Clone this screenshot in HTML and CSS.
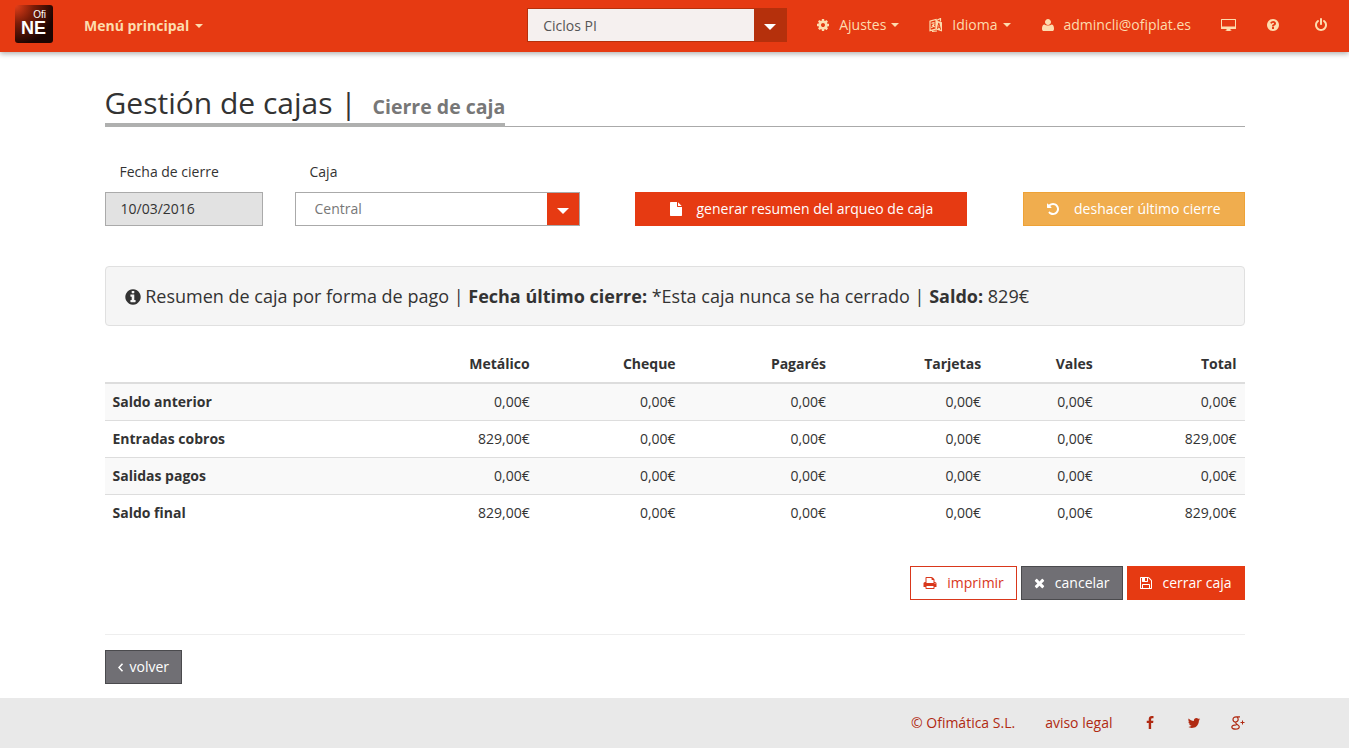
FILE: index.html
```
<!DOCTYPE html>
<html lang="es">
<head>
<meta charset="utf-8">
<title>Gestión de cajas</title>
<link rel="stylesheet" href="styles.css">
</head>
<body>
<header class="topbar">
  <a class="logo" href="#" aria-label="Ofi NE"><span class="logo-small">Ofi</span><span class="logo-big">NE</span></a>
  <button type="button" class="main-menu">Menú principal <span class="caret"></span></button>
  <div class="picker picker-dark">
    <select aria-label="Empresa"><option>Ciclos PI</option></select>
    <span class="picker-arrow"></span>
  </div>
  <nav class="tools">
    <button type="button" class="tool">
      <svg class="icon" viewBox="0 0 1792 1792"><path d="M1152 896q0-106-75-181t-181-75-181 75-75 181 75 181 181 75 181-75 75-181zm512-109v222q0 12-8 23t-20 13l-185 28q-19 54-39 91 35 50 107 138 10 12 10 25t-9 23q-27 37-99 108t-94 71q-12 0-26-9l-138-108q-44 23-91 38-16 136-29 186-7 28-36 28h-222q-14 0-24.5-8.5t-11.5-21.5l-28-184q-49-16-90-37l-141 107q-10 9-25 9-14 0-25-11-126-114-165-168-7-10-7-23 0-12 8-23 15-21 51-66.5t54-70.5q-27-50-41-99l-183-27q-13-2-21-12.5t-8-23.5v-222q0-12 8-23t19-13l186-28q14-46 39-92-40-57-107-138-10-12-10-24 0-10 9-23 26-36 98.5-107.5t94.5-71.5q13 0 26 10l138 107q44-23 91-38 16-136 29-186 7-28 36-28h222q14 0 24.5 8.5t11.5 21.5l28 184q49 16 90 37l142-107q9-9 24-9 13 0 25 10 129 119 165 170 7 8 7 22 0 12-8 23-15 21-51 66.5t-54 70.5q26 50 41 98l183 28q13 2 21 12.5t8 23.5z"/></svg>
      <span>Ajustes</span><span class="caret"></span>
    </button>
    <button type="button" class="tool">
      <svg class="icon line" viewBox="0 0 14 14"><path d="M1 3.200l6-1.700v9.500l-6 1.700zM2.500 5.300l3-.800M4 4.200v1.200M5.200 5.500Q4.500 8.500 2.300 9.800M3 7l2.700 2M7.500 2.500l4-2v3M3 13.300l5-.300"/><path class="solid" fill-rule="evenodd" d="M7 2.500l6 1.800v9.300l-6-2zM9.300 4.800L8 10.600l1 .300.300-1.300 1.400.400.400 1.500 1 .300-1.800-6.700zM9.800 6.500l.600 2.300-1-.300z"/></svg>
      <span>Idioma</span><span class="caret"></span>
    </button>
    <a class="tool" href="#">
      <svg class="icon" viewBox="0 0 1792 1792"><path d="M1664 1399q0 109-62.500 187t-150.500 78h-1110q-88 0-150.500-78t-62.500-187q0-85 8.500-160.500t31.500-152 58.500-131 94-89 134.500-34.500q131 128 441 128t441-128q76 0 134.500 34.500t94 89 58.500 131 31.500 152 8.500 160.500zm-384-887q0 159-112.500 271.500t-271.500 112.500-271.500-112.500-112.500-271.500 112.500-271.500 271.500-112.500 271.500 112.500 112.500 271.500z"/></svg>
      <span>admincli@ofiplat.es</span>
    </a>
    <button type="button" class="tool" aria-label="Pantalla">
      <svg class="icon icon-screen" viewBox="0 0 15 14"><path fill-rule="evenodd" d="M0 1.500Q0 1 .500 1h14q.500 0 .500.500v9q0 .500-.500.500H9.500v1.500h1V13h-6v-.500h1V11h-5q-.500 0-.500-.500zM1 2v6.500h13V2z"/></svg>
    </button>
    <button type="button" class="tool" aria-label="Ayuda">
      <svg class="icon" viewBox="0 0 1792 1792"><path d="M1024 1376v-192q0-14-9-23t-23-9h-192q-14 0-23 9t-9 23v192q0 14 9 23t23 9h192q14 0 23-9t9-23zm256-672q0-88-55.500-163t-138.500-116-170-41q-243 0-371 213-15 24 8 42l132 100q7 6 19 6 16 0 25-12 53-68 86-92 34-24 86-24 48 0 85.500 26t37.500 59q0 38-20 61t-68 45q-63 28-115.500 86.500t-52.500 125.500v36q0 14 9 23t23 9h192q14 0 23-9t9-23q0-19 21.500-49.500t54.500-49.500q32-18 49-28.500t46-35 44.500-48 28-60.500 12.500-81zm384 192q0 209-103 385.500t-279.500 279.500-385.500 103-385.500-103-279.500-279.500-103-385.500 103-385.500 279.500-279.500 385.500-103 385.500 103 279.500 279.500 103 385.500z"/></svg>
    </button>
    <button type="button" class="tool tool-exit" aria-label="Salir">
      <svg class="icon" viewBox="0 0 1792 1792"><path d="M1664 896q0 156-61 298t-164 245-245 164-298 61-298-61-245-164-164-245-61-298q0-182 80.500-343t226.500-270q43-32 95.500-25t83.500 50q32 42 24.500 94.500t-49.500 84.500q-98 74-151.500 181t-53.500 228q0 104 40.500 198.500t109.500 163.500 163.500 109.500 198.500 40.500 198.500-40.500 163.500-109.500 109.500-163.500 40.500-198.500q0-121-53.500-228t-151.500-181q-42-32-49.500-84.500t24.500-94.500q31-43 84-50t95 25q146 109 226.500 270t80.500 343zm-640-768v640q0 52-38 90t-90 38-90-38-38-90v-640q0-52 38-90t90-38 90 38 38 90z"/></svg>
    </button>
  </nav>
</header>

<main class="container">
  <div class="heading">
    <h1>Gestión de cajas | <small>Cierre de caja</small></h1>
  </div>

  <form class="filters">
    <div class="field field-date">
      <label for="fecha">Fecha de cierre</label>
      <input id="fecha" type="text" value="10/03/2016" readonly>
    </div>
    <div class="field">
      <label for="caja">Caja</label>
      <div class="picker">
        <select id="caja"><option>Central</option></select>
        <span class="picker-arrow"></span>
      </div>
    </div>
    <div class="filter-actions">
      <button type="button" class="btn btn-primary btn-report">
        <svg class="icon" viewBox="0 0 1792 1792"><path d="M1152 512v-472q22 14 36 28l408 408q14 14 28 36h-472zm-128 32q0 40 28 68t68 28h544v1056q0 40-28 68t-68 28h-1344q-40 0-68-28t-28-68v-1600q0-40 28-68t68-28h800v544z"/></svg>
        generar resumen del arqueo de caja
      </button>
      <button type="button" class="btn btn-warning">
        <svg class="icon" viewBox="0 0 1792 1792"><path d="M1664 896q0 156-61 298t-164 245-245 164-298 61q-172 0-327-72.500t-264-204.500q-7-10-6.500-22.500t8.500-20.500l137-138q10-9 25-9 16 2 23 12 73 95 179 147t225 52q104 0 198.500-40.500t163.500-109.500 109.500-163.500 40.500-198.500-40.500-198.500-109.500-163.500-163.500-109.500-198.500-40.500q-98 0-188 35.500t-160 101.500l137 138q31 30 14 69-17 40-59 40h-448q-26 0-45-19t-19-45v-448q0-42 40-59 39-17 69 14l130 129q107-101 244.500-156.500t284.500-55.500q156 0 298 61t245 164 164 245 61 298z"/></svg>
        deshacer último cierre
      </button>
    </div>
  </form>

  <p class="summary">
    <svg class="icon" viewBox="0 0 1792 1792"><path d="M1152 1376v-160q0-14-9-23t-23-9h-96v-512q0-14-9-23t-23-9h-320q-14 0-23 9t-9 23v160q0 14 9 23t23 9h96v320h-96q-14 0-23 9t-9 23v160q0 14 9 23t23 9h448q14 0 23-9t9-23zm-128-896v-160q0-14-9-23t-23-9h-192q-14 0-23 9t-9 23v160q0 14 9 23t23 9h192q14 0 23-9t9-23zm640 416q0 209-103 385.500t-279.500 279.500-385.500 103-385.500-103-279.500-279.500-103-385.500 103-385.500 279.500-279.500 385.500-103 385.500 103 279.500 279.500 103 385.500z"/></svg>
    Resumen de caja por forma de pago | <b>Fecha último cierre:</b> *Esta caja nunca se ha cerrado | <b>Saldo:</b> 829€
  </p>

  <table class="totals">
    <colgroup><col class="c-name"><col class="c-cash"><col class="c-cheque"><col class="c-note"><col class="c-card"><col class="c-voucher"><col class="c-total"></colgroup>
    <thead>
      <tr><td></td><th>Metálico</th><th>Cheque</th><th>Pagarés</th><th>Tarjetas</th><th>Vales</th><th>Total</th></tr>
    </thead>
    <tbody>
      <tr><th>Saldo anterior</th><td>0,00€</td><td>0,00€</td><td>0,00€</td><td>0,00€</td><td>0,00€</td><td>0,00€</td></tr>
      <tr><th>Entradas cobros</th><td>829,00€</td><td>0,00€</td><td>0,00€</td><td>0,00€</td><td>0,00€</td><td>829,00€</td></tr>
      <tr><th>Salidas pagos</th><td>0,00€</td><td>0,00€</td><td>0,00€</td><td>0,00€</td><td>0,00€</td><td>0,00€</td></tr>
      <tr><th>Saldo final</th><td>829,00€</td><td>0,00€</td><td>0,00€</td><td>0,00€</td><td>0,00€</td><td>829,00€</td></tr>
    </tbody>
  </table>

  <div class="actions">
    <button type="button" class="btn btn-outline">
      <svg class="icon" viewBox="0 0 1792 1792"><path d="M448 1536h896v-256h-896v256zm0-640h896v-384h-160q-40 0-68-28t-28-68v-160h-640v640zm1152 64q0-26-19-45t-45-19-45 19-19 45 19 45 45 19 45-19 19-45zm128 0v416q0 13-9.500 22.500t-22.500 9.500h-224v160q0 40-28 68t-68 28h-960q-40 0-68-28t-28-68v-160h-224q-13 0-22.500-9.500t-9.500-22.500v-416q0-79 56.500-135.500t135.500-56.500h64v-544q0-40 28-68t68-28h672q40 0 88 20t76 48l152 152q28 28 48 76t20 88v256h64q79 0 135.500 56.500t56.500 135.500z"/></svg>
      imprimir
    </button>
    <button type="button" class="btn btn-grey">
      <svg class="icon icon-narrow" viewBox="200 0 1392 1792"><path d="M1490 1322q0 40-28 68l-136 136q-28 28-68 28t-68-28l-294-294-294 294q-28 28-68 28t-68-28l-136-136q-28-28-28-68t28-68l294-294-294-294q-28-28-28-68t28-68l136-136q28-28 68-28t68 28l294 294 294-294q28-28 68-28t68 28l136 136q28 28 28 68t-28 68l-294 294 294 294q28 28 28 68z"/></svg>
      cancelar
    </button>
    <button type="button" class="btn btn-primary btn-close">
      <svg class="icon" viewBox="0 0 1792 1792"><path d="M512 1536h768v-384h-768v384zm896 0h128v-896q0-14-10-38.500t-20-34.500l-281-281q-10-10-34-20t-39-10v416q0 40-28 68t-68 28h-576q-40 0-68-28t-28-68v-416h-128v1280h128v-416q0-40 28-68t68-28h832q40 0 68 28t28 68v416zm-384-928v-320q0-13-9.500-22.500t-22.500-9.500h-192q-13 0-22.500 9.500t-9.500 22.500v320q0 13 9.500 22.500t22.500 9.500h192q13 0 22.500-9.500t9.500-22.500zm640 32v928q0 40-28 68t-68 28h-1344q-40 0-68-28t-28-68v-1344q0-40 28-68t68-28h928q40 0 88 20t76 48l280 280q28 28 48 76t20 88z"/></svg>
      cerrar caja
    </button>
  </div>

  <div class="back">
    <button type="button" class="btn btn-grey btn-back">
      <svg class="icon icon-chevron" viewBox="0 0 6 14"><path d="M4.500 3.800L1 7.500l3.500 3.700"/></svg>
      volver
    </button>
  </div>
</main>

<footer class="footer">
  <div class="footer-links">
    <a href="#">© Ofimática S.L.</a>
    <a href="#">aviso legal</a>
    <a href="#" aria-label="Facebook"><svg class="icon" viewBox="0 0 1792 1792"><path d="M1343 12v264h-157q-86 0-116 36t-30 108v189h293l-39 296h-254v759h-306v-759h-255v-296h255v-218q0-186 104-288.500t277-102.500q147 0 228 12z"/></svg></a>
    <a href="#" aria-label="Twitter"><svg class="icon" viewBox="0 0 1792 1792"><path d="M1684 408q-67 98-162 167 1 14 1 42 0 130-38 259.500t-115.500 248.500-184.500 210.500-258 146-323 54.500q-271 0-496-145 35 4 78 4 225 0 401-138-105-2-188-64.500t-114-159.500q33 5 61 5 43 0 85-11-112-23-185.500-111.500t-73.500-205.500v-4q68 38 146 41-66-44-105-115t-39-154q0-88 44-163 121 149 294.500 238.500t371.500 99.500q-8-38-8-74 0-134 94.500-228.500t228.500-94.500q140 0 236 102 109-21 205-78-37 115-142 178 93-10 186-50z"/></svg></a>
    <a href="#" aria-label="Google+"><svg class="icon line" viewBox="0 0 14 14"><path d="M9 .800H5.200C3 .800 2 2 2 3.500S3 6 4.500 6 7.200 5 7.200 3.600 6.500 1.300 5.700 .900M5.200 6C4.200 7 5 7.700 6.200 8.400S8.300 9.600 8.300 10.800 6.800 13.200 4.600 13.200 .800 12.400 .800 11.100 2.300 8.900 5.500 8.800"/><path stroke-width="1" d="M11.500 4.500v4M9.500 6.500h4"/></svg></a>
  </div>
</footer>
</body>
</html>
```
FILE: styles.css
```
* {
  box-sizing: border-box;
}

body {
  margin: 0;
  min-height: 100vh;
  display: flex;
  flex-direction: column;
  background: #fff;
  color: #333;
  font: 14px/20px "Open Sans", sans-serif;
}

button,
input,
select {
  font: inherit;
  color: inherit;
  border-radius: 0;
}

button {
  cursor: pointer;
}

a {
  color: inherit;
  text-decoration: none;
}

.icon {
  width: 14px;
  height: 14px;
  flex: none;
  fill: currentColor;
}

.icon.line {
  fill: none;
  stroke: currentColor;
  stroke-width: 1.2;
}

.icon .solid {
  fill: currentColor;
  stroke: none;
}

.icon-screen {
  width: 15px;
}

.icon-narrow {
  width: 11px;
}

.icon-chevron {
  width: 6px;
  fill: none;
  stroke: currentColor;
  stroke-width: 1.6;
}

.caret {
  width: 0;
  border: 4px solid transparent;
  border-top-color: currentColor;
  border-bottom: 0;
}

/* Top bar */

.topbar {
  display: flex;
  align-items: center;
  height: 52px;
  padding: 0 6px 2px 15px;
  background: #e63a12;
  color: #fddcae;
  box-shadow: 0 2px 5px rgba(0, 0, 0, 0.3);
}

.logo {
  display: flex;
  flex-direction: column;
  align-items: flex-end;
  width: 38px;
  height: 38px;
  margin-bottom: 2px;
  padding: 5px 7px 0 0;
  border-radius: 3px;
  background: radial-gradient(circle at 0 0, #e8401a 0, #7a1c08 35%, #1c0502 75%);
  color: #fff;
  font-family: "Liberation Sans", sans-serif;
}

.logo-small {
  font-size: 10px;
  line-height: 9px;
}

.logo-big {
  font-size: 18px;
  line-height: 18px;
  font-weight: bold;
}

.main-menu {
  display: flex;
  align-items: center;
  gap: 6px;
  margin-left: 31px;
  padding: 2px 0 0;
  border: 0;
  background: none;
  font-weight: 700;
}

.tools {
  display: flex;
}

.tool {
  display: flex;
  align-items: center;
  gap: 5px;
  padding: 0 15px;
  border: 0;
  background: none;
}

.tool .icon + span {
  margin-left: 4px;
}

.tool-exit {
  padding-left: 19px;
}

/* Drop-downs */

.picker {
  display: grid;
  grid-template-columns: 1fr 32px;
  height: 34px;
  border: 1px solid #aaa;
  background: #fff;
  color: #777;
}

.picker select {
  grid-area: 1 / 1 / 2 / 3;
  appearance: none;
  width: 100%;
  padding: 0 48px 0 19px;
  border: 0;
  background: none;
}

.picker-arrow {
  grid-area: 1 / 2;
  display: grid;
  place-items: center;
  padding-top: 3px;
  background: #e63a12;
  pointer-events: none;
}

.picker-arrow::after {
  content: "";
  border: 6px solid transparent;
  border-top-color: #fff;
  border-bottom: 0;
}

.picker-dark {
  width: 260px;
  margin-left: auto;
  margin-right: 14px;
  border-color: #b5300c;
  background: #f5f0ef;
  color: #555;
}

.picker-dark select {
  padding: 1px 48px 0 15px;
}

.picker-dark .picker-arrow {
  background: #b5300c;
}

/* Content */

.container {
  flex: 1;
  width: 100%;
  max-width: 1170px;
  margin: 0 auto;
  padding: 34px 15px 14px;
}

.heading {
  display: flex;
  border-bottom: 1px solid #aaa;
}

h1 {
  margin: 0 0 -1px;
  padding-bottom: 3px;
  border-bottom: 4px solid #afb0af;
  font-size: 30px;
  line-height: 34px;
  font-weight: 400;
}

h1 small {
  margin-left: 8px;
  color: #777;
  font-size: 65%;
  line-height: 20px;
  font-weight: 700;
}

.filters {
  display: grid;
  grid-template-columns: 2fr 3fr 7fr;
  align-items: end;
  margin-top: 35px;
}

.field label {
  display: block;
  margin-bottom: 10px;
  padding-left: 15px;
}

.field-date {
  padding-right: 32px;
}

.field input {
  display: block;
  width: 100%;
  height: 34px;
  padding: 0 15px 2px;
  border: 1px solid #aaa;
  background: #e2e2e2;
}

.filter-actions {
  display: flex;
  justify-content: space-between;
  padding-left: 55px;
}

.btn {
  display: flex;
  align-items: center;
  gap: 10px;
  height: 34px;
  padding: 0 12px;
  border: 1px solid;
}

.btn-primary {
  background: #e63a12;
  border-color: #e63a12;
  color: #fff;
}

.btn-warning {
  padding: 0 23px 0 22px;
  gap: 14px;
  background: #f0ad4e;
  border-color: #eea236;
  color: #fff;
}

.btn-report {
  padding: 0 33px;
  gap: 14px;
}

.btn-outline {
  background: #fff;
  border-color: #d9371b;
  color: #d9371b;
}

.btn-grey {
  background: #706f74;
  border-color: #4a4a4d;
  color: #fff;
}

.btn-close {
  padding-left: 11px;
}

.summary {
  margin: 40px 0 20px;
  padding: 19px 18px;
  border: 1px solid #e0e0e0;
  border-radius: 4px;
  background: #f5f5f5;
  font-size: 18px;
  line-height: 20px;
}

.summary .icon {
  width: 18px;
  height: 18px;
  margin-right: -1px;
  vertical-align: -3px;
}

/* Totals table */

.totals {
  width: 100%;
  table-layout: fixed;
  border-collapse: separate;
  border-spacing: 0;
}

.totals th,
.totals td {
  padding: 8px;
  border-top: 1px solid #ddd;
  text-align: right;
}

.totals thead th,
.totals thead td {
  border-top: 0;
  border-bottom: 2px solid #ddd;
}

.totals tbody th {
  text-align: left;
}

.totals tbody tr:first-child > * {
  border-top: 0;
}

.totals tbody tr:nth-child(odd) {
  background: #f9f9f9;
}

.c-name { width: 25%; }
.c-cash { width: 13%; }
.c-cheque { width: 12.8%; }
.c-note { width: 13.2%; }
.c-card { width: 13.6%; }
.c-voucher { width: 9.8%; }
.c-total { width: 12.6%; }

.actions {
  display: flex;
  justify-content: flex-end;
  gap: 4px;
  margin-top: 35px;
}

.back {
  margin-top: 34px;
  padding-top: 15px;
  border-top: 1px solid #eee;
}

.btn-back {
  gap: 6px;
}

/* Footer */

.footer {
  background: #e9e9e9;
  color: #b02a12;
}

.footer-links {
  display: flex;
  align-items: center;
  justify-content: flex-end;
  gap: 30px;
  max-width: 1170px;
  margin: 0 auto;
  padding: 15px;
}

.footer-links .icon {
  display: block;
}
```
